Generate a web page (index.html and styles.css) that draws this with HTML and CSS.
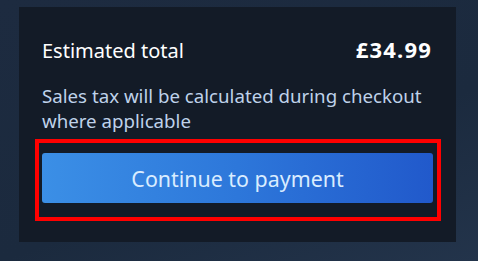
FILE: index.html
```html
<!DOCTYPE html>
<html lang="en">
<head>
<meta charset="utf-8">
<link rel="stylesheet" href="styles.css">
</head>
<body>
<div class="page">
  <section class="summary">
    <div class="total-row">
      <span class="total-label">Estimated total</span>
      <span class="total-price">£34.99</span>
    </div>
    <p class="tax-note">Sales tax will be calculated during checkout where applicable</p>
    <div class="highlight">
      <button class="pay-btn" type="button">Continue to payment</button>
    </div>
  </section>
</div>
</body>
</html>
```
FILE: styles.css
```css
html, body {
  margin: 0;
  padding: 0;
}
body {
  width: 478px;
  height: 261px;
  overflow: hidden;
  background: linear-gradient(160deg, #1d2b40 0%, #1b2a3e 60%, #23344b 100%);
  font-family: "Noto Sans", "Open Sans", Arial, sans-serif;
}
.page {
  padding: 7px 22px 0 19px;
}
.summary {
  background: #131b27;
  height: 235px;
  box-sizing: border-box;
  padding: 30px 25px 0 16px;
}
.total-row {
  display: flex;
  justify-content: space-between;
  align-items: baseline;
  padding-left: 7px;
  height: 24px;
  line-height: 24px;
}
.total-label {
  color: #ffffff;
  font-size: 20px;
}
.total-price {
  color: #ffffff;
  font-size: 22px;
  font-weight: 700;
  letter-spacing: 1.2px;
  margin-right: -1px;
}
.tax-note {
  margin: 22px 0 0 7px;
  color: #bfd2ea;
  font-size: 18.7px;
  line-height: 25px;
}
.highlight {
  margin-top: 6px;
  width: 406px;
  box-sizing: border-box;
  border: 4px solid #ff0000;
  padding: 10px 4px 14px 3px;
}
.pay-btn {
  display: block;
  width: 100%;
  height: 50px;
  border: none;
  border-radius: 3px;
  background: linear-gradient(90deg, #3b8fe6 0%, #2d77da 50%, #2159cb 100%);
  color: #d9ecff;
  font-family: "Noto Sans", "Open Sans", Arial, sans-serif;
  font-size: 21.4px;
  padding: 0;
  cursor: pointer;
}
```
